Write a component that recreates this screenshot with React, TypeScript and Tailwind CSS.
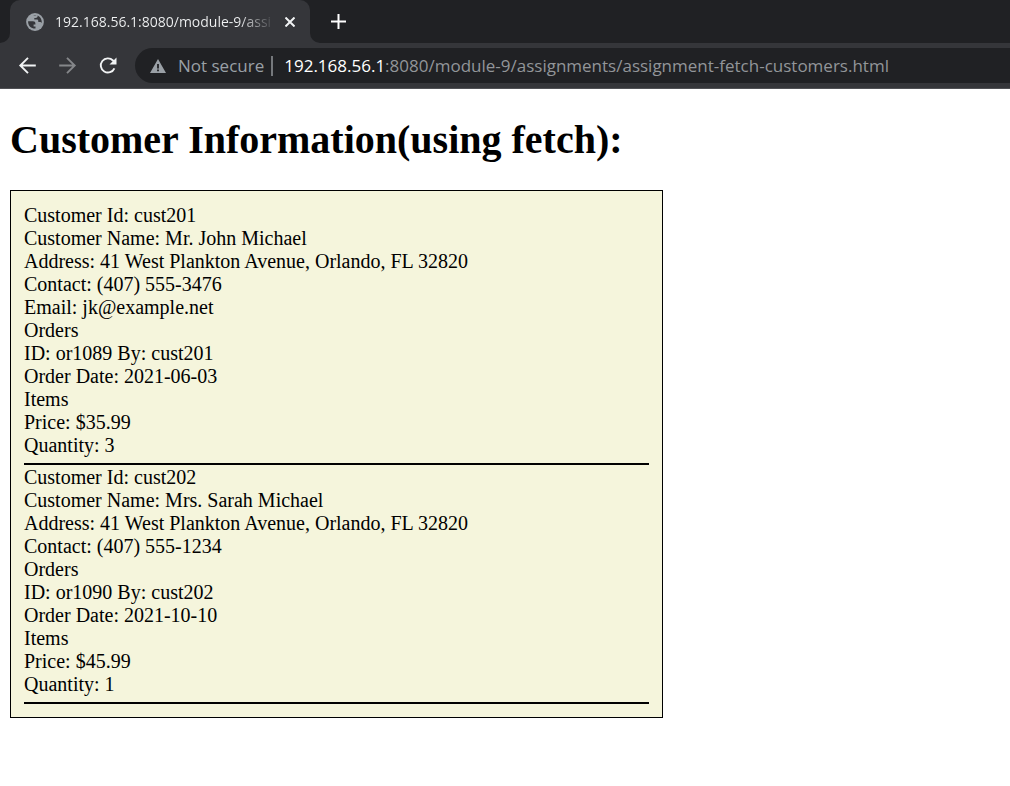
import { ReactNode } from "react";

type Customer = {
  id: string;
  name: string;
  address: string;
  contact: string;
  email?: string;
  order: { id: string; date: string; price: string; quantity: number };
};

const customers: Customer[] = [
  {
    id: "cust201",
    name: "Mr. John Michael",
    address: "41 West Plankton Avenue, Orlando, FL 32820",
    contact: "(407) 555-3476",
    email: "jk@example.net",
    order: { id: "or1089", date: "2021-06-03", price: "$35.99", quantity: 3 },
  },
  {
    id: "cust202",
    name: "Mrs. Sarah Michael",
    address: "41 West Plankton Avenue, Orlando, FL 32820",
    contact: "(407) 555-1234",
    order: { id: "or1090", date: "2021-10-10", price: "$45.99", quantity: 1 },
  },
];

function ToolButton({ label, className, children }: { label: string; className: string; children: ReactNode }) {
  return (
    <button type="button" aria-label={label} className={`flex size-10 items-center justify-center ${className}`}>
      {children}
    </button>
  );
}

function TabStrip() {
  return (
    <div className="flex h-[43px] items-stretch bg-[#202124]">
      <svg className="size-[10px] shrink-0 self-end" viewBox="0 0 10 10" fill="#35363a" aria-hidden="true">
        <path d="M10 0v10H0A10 10 0 0 0 10 0z" />
      </svg>
      <div className="flex w-[300px] items-center rounded-t-[10px] bg-[#35363a] pr-[10px] pl-4">
        <svg className="size-[18px] shrink-0" viewBox="0 0 18 18" aria-hidden="true">
          <circle cx="9" cy="9" r="8.9" fill="#9aa0a6" />
          <path
            d="M2.100 8.200H7c1.500 0 2.400.8 2.400 2.200v1.200H7.600v1.900h1.900v2.100C5.400 15.900 2.100 12.800 2.100 9zM7 2.400c1.800-.5 3.300-.3 4.700.3-.1 1.500-.9 2.200-2.200 2.200H8.300v1.700h2.500c1 0 1.500.6 1.500 1.500v1h1.900c.8 0 1.300.4 1.600 1.100.4-3.900-2.300-8.100-6.800-8.100z"
            fill="#35363a"
          />
        </svg>
        <span className="ml-[11px] bg-linear-to-r from-[#f1f3f4] from-85% to-[#4b4c50] bg-clip-text text-[14px] leading-5 whitespace-nowrap text-transparent">
          192.168.56.1:8080/module-9/assi
        </span>
        <button type="button" aria-label="Close tab" className="ml-auto flex size-5 items-center justify-center text-[#f1f3f4]">
          <svg className="size-[10px]" viewBox="0 0 10 10" stroke="currentColor" strokeWidth="2" aria-hidden="true">
            <path d="M0.500 0.500l9 9M9.500 0.500l-9 9" />
          </svg>
        </button>
      </div>
      <svg className="size-[10px] shrink-0 self-end" viewBox="0 0 10 10" fill="#35363a" aria-hidden="true">
        <path d="M0 0v10h10A10 10 0 0 1 0 0z" />
      </svg>
      <button type="button" aria-label="New tab" className="ml-[2px] flex w-8 items-center justify-center text-white">
        <svg className="size-[15px]" viewBox="0 0 15 15" stroke="currentColor" strokeWidth="2" aria-hidden="true">
          <path d="M7.500 0v15M0 7.500h15" />
        </svg>
      </button>
    </div>
  );
}

function Toolbar() {
  return (
    <div className="flex h-[46px] items-center border-b border-[#505155] bg-[#35363a] pl-2">
      <ToolButton label="Back" className="text-[#f1f3f4]">
        <svg className="size-6" viewBox="0 0 24 24" fill="none" stroke="currentColor" strokeWidth="1.900" aria-hidden="true">
          <path d="M19.800 11.500H4.600M12 3.800 4.300 11.500l7.700 7.700" />
        </svg>
      </ToolButton>
      <ToolButton label="Forward" className="text-[#85878a]">
        <svg className="size-6" viewBox="0 0 24 24" fill="none" stroke="currentColor" strokeWidth="1.900" aria-hidden="true">
          <path d="M3.200 11.500h15.200M11 3.800l7.700 7.700-7.700 7.700" />
        </svg>
      </ToolButton>
      <ToolButton label="Reload" className="text-[#f1f3f4]">
        <svg className="size-6" viewBox="0 0 24 24" aria-hidden="true">
          <path d="M18.400 14.300A7.100 7.100 0 1 1 17 6.500L18.500 8" fill="none" stroke="currentColor" strokeWidth="1.900" />
          <path d="M20.500 3.500v7h-7z" fill="currentColor" />
        </svg>
      </ToolButton>
      <div className="ml-[7px] flex h-[35px] min-w-0 grow items-center rounded-l-full bg-[#202124] pl-[15px] text-[17px] text-[#9aa0a6]">
        <svg className="size-4 shrink-0" viewBox="0 0 16 16" aria-hidden="true">
          <path d="M8 1 16 15H0zM7.100 6v4.500h1.800V6zm0 5.500v1.700h1.800v-1.700z" fill="#9aa0a6" fillRule="evenodd" />
        </svg>
        <span className="ml-3 whitespace-nowrap">Not secure</span>
        <span className="mr-[11px] ml-[7px] h-5 w-[2px] shrink-0 bg-[#75787c]" />
        <span className="truncate text-[#929599]">
          <span className="text-white">192.168.56.1</span>:8080/module-9/assignments/assignment-fetch-customers.html
        </span>
      </div>
    </div>
  );
}

function CustomerRecord({ customer }: { customer: Customer }) {
  const { order } = customer;
  return (
    <section className="border-b-2 border-black pb-[6px]">
      <p>Customer Id: {customer.id}</p>
      <p>Customer Name: {customer.name}</p>
      <p>Address: {customer.address}</p>
      <p>Contact: {customer.contact}</p>
      {customer.email && <p>Email: {customer.email}</p>}
      <p>Orders</p>
      <p>ID: {order.id} By: {customer.id}</p>
      <p>Order Date: {order.date}</p>
      <p>Items</p>
      <p>Price: {order.price}</p>
      <p>Quantity: {order.quantity}</p>
    </section>
  );
}

export default function App() {
  return (
    <div className="min-h-screen bg-white">
      <header className="font-['Open_Sans',sans-serif]">
        <TabStrip />
        <Toolbar />
      </header>
      <main className="px-[10px] pt-7 font-['Liberation_Serif',serif] text-black">
        <h1 className="text-[40px] leading-[46px] font-bold">Customer Information(using fetch):</h1>
        <div className="mt-[27px] flex max-w-[653px] flex-col gap-px border border-black bg-[#f5f5dc] p-[13px] text-[20px] leading-[23px]">
          {customers.map((customer) => (
            <CustomerRecord key={customer.id} customer={customer} />
          ))}
        </div>
      </main>
    </div>
  );
}
